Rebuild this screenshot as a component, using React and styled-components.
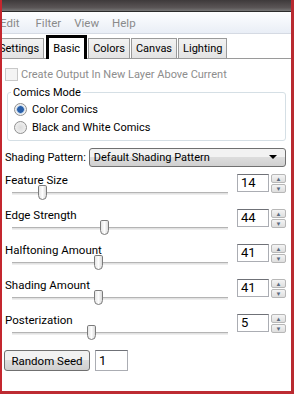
import React from 'react';
import styled, { createGlobalStyle } from 'styled-components';

const GlobalStyle = createGlobalStyle`
  html, body { margin: 0; padding: 0; background: #fff; }
  body { font-family: Roboto, "Liberation Sans", Arial, sans-serif; font-size: 11px; color: #000; }
`;

const sliders = [
  { label: 'Feature Size', value: 14, pos: 26 },
  { label: 'Edge Strength', value: 44, pos: 88 },
  { label: 'Halftoning Amount', value: 41, pos: 82 },
  { label: 'Shading Amount', value: 41, pos: 82 },
  { label: 'Posterization', value: 5, pos: 75 },
];

const tabs = ['Settings', 'Basic', 'Colors', 'Canvas', 'Lighting'];

const App = () => (
  <>
    <GlobalStyle />
    <Window>
      <TitleBar />
      <MenuBar>
        <MenuItem $first>Edit</MenuItem>
        <MenuItem>Filter</MenuItem>
        <MenuItem>View</MenuItem>
        <MenuItem>Help</MenuItem>
      </MenuBar>
      <TabStrip>
        {tabs.map(t => (
          <Tab key={t} $active={t === 'Basic'} $first={t === 'Settings'}>{t}</Tab>
        ))}
      </TabStrip>
      <Content>
        <CheckRow>
          <CheckBox />
          <span>Create Output In New Layer Above Current</span>
        </CheckRow>
        <Group>
          <Legend>Comics Mode</Legend>
          <RadioRow>
            <Radio $checked />
            Color Comics
          </RadioRow>
          <RadioRow>
            <Radio />
            Black and White Comics
          </RadioRow>
        </Group>
        <PatternRow>
          <span>Shading Pattern:</span>
          <Select>
            <span>Default Shading Pattern</span>
            <Caret />
          </Select>
        </PatternRow>
        {sliders.map(s => (
          <SliderBlock key={s.label}>
            <SliderHead>
              <span>{s.label}</span>
              <NumBox>{s.value}</NumBox>
              <Spin>
                <SpinBtn>▲</SpinBtn>
                <SpinBtn>▼</SpinBtn>
              </Spin>
            </SliderHead>
            <Track>
              <Thumb style={{ left: s.pos }} />
            </Track>
          </SliderBlock>
        ))}
        <SeedRow>
          <Button>Random Seed</Button>
          <SeedBox>1</SeedBox>
        </SeedRow>
      </Content>
    </Window>
  </>
);

const Window = styled.div`
  width: 294px;
  height: 394px;
  box-sizing: border-box;
  border-left: 2px solid #c4262e;
  border-right: 3px solid #b82a30;
  border-bottom: 3px solid #bd2b32;
  display: flex;
  flex-direction: column;
  overflow: hidden;
  background: #fff;
`;

const TitleBar = styled.div`
  height: 11px;
  background: linear-gradient(#3e3a3b, #5a5556 70%, #777);
  border-bottom: 1px solid #2c2c2c;
`;

const MenuBar = styled.div`
  height: 21px;
  display: flex;
  align-items: center;
  gap: 13px;
  background: linear-gradient(#fdfeff, #e9eef6);
  border-bottom: 1px solid #d5dae3;
  color: #8a8a8a;
  font-size: 11.5px;
`;

const MenuItem = styled.span`
  margin-left: ${p => (p.$first ? '-2px' : '0')};
  margin-right: ${p => (p.$first ? '3px' : '0')};
`;

const TabStrip = styled.div`
  height: 24px;
  display: flex;
  align-items: flex-end;
  background: #fff;
  border-bottom: 1px solid #9a9a9a;
`;

const Tab = styled.div`
  box-sizing: border-box;
  height: ${p => (p.$active ? '24px' : '20px')};
  margin-left: ${p => (p.$first ? '-8px' : p.$active ? '1px' : '0')};
  margin-right: 1px;
  padding: ${p => (p.$active ? '3px 4px 0' : '2px 4px 0')};
  border: ${p => (p.$active ? '3px solid #000' : '1px solid #9a9a9a')};
  border-bottom: ${p => (p.$active ? 'none' : '0')};
  background: ${p => (p.$active ? '#fff' : 'linear-gradient(#f2f2f2, #e3e3e3)')};
  margin-bottom: ${p => (p.$active ? '-1px' : '0')};
  line-height: 16px;
`;

const Content = styled.div`
  display: flex;
  flex-direction: column;
  padding: 8px 5px 0 3px;
`;

const CheckRow = styled.div`
  display: flex;
  align-items: center;
  gap: 3px;
  color: #8d8d8d;
  height: 14px;
`;

const CheckBox = styled.div`
  width: 11px;
  height: 11px;
  border: 1px solid #c8c8c8;
  background: #f4f4f4;
`;

const Group = styled.fieldset`
  margin: 5px 0 0 2px;
  padding: 1px 6px 4px;
  border: 1px solid #d5dfe5;
  border-radius: 3px;
`;

const Legend = styled.legend`
  padding: 0 2px;
  margin-left: -3px;
`;

const RadioRow = styled.div`
  display: flex;
  align-items: center;
  gap: 5px;
  height: 18px;
`;

const Radio = styled.div`
  width: 11px;
  height: 11px;
  border-radius: 50%;
  border: 1px solid #8f8f8f;
  background: ${p =>
    p.$checked
      ? 'radial-gradient(circle, #2a5fa8 0 3px, #8db4e0 3.5px, #f1f1f1 4.5px)'
      : 'radial-gradient(circle, #dcdcdc, #f6f6f6)'};
`;

const PatternRow = styled.div`
  display: flex;
  align-items: center;
  gap: 3px;
  margin-top: 6px;
  height: 20px;
`;

const Select = styled.div`
  flex: 1;
  height: 19px;
  box-sizing: border-box;
  display: flex;
  align-items: center;
  justify-content: space-between;
  padding: 0 8px 0 4px;
  border: 1px solid #707070;
  border-radius: 3px;
  background: linear-gradient(#f2f2f2 50%, #dcdcdc 50%, #d0d0d0);
`;

const Caret = styled.div`
  width: 0;
  height: 0;
  border-left: 4px solid transparent;
  border-right: 4px solid transparent;
  border-top: 4px solid #000;
`;

const SliderBlock = styled.div`
  display: flex;
  flex-direction: column;
  margin-top: 9px;
  &:not(:first-of-type) { margin-top: 6px; }
`;

const SliderHead = styled.div`
  display: flex;
  align-items: center;
  height: 19px;

  & > span:first-child { flex: 1; align-self: flex-start; font-size: 11.5px; }
`;

const NumBox = styled.div`
  width: 32px;
  height: 18px;
  box-sizing: border-box;
  border: 1px solid #abadb3;
  border-top-color: #6f7177;
  padding-left: 3px;
  line-height: 16px;
  font-size: 13px;
`;

const Spin = styled.div`
  width: 15px;
  height: 18px;
  margin-left: 2px;
  display: flex;
  flex-direction: column;
  gap: 1px;
`;

const SpinBtn = styled.div`
  flex: 1;
  border: 1px solid #b7b7b7;
  border-radius: 2px;
  background: linear-gradient(#f4f4f4, #dedede);
  font-size: 6px;
  line-height: 7px;
  text-align: center;
  color: #5a6a80;
`;

const Track = styled.div`
  position: relative;
  margin: 0 58px 7px 7px;
  border-top: 1px solid #b4b4b4;
  border-bottom: 1px solid #eee;
  background: #e2e2e2;
  height: 1px;
`;

const Thumb = styled.div`
  position: absolute;
  top: -8px;
  width: 9px;
  height: 15px;
  box-sizing: border-box;
  border: 1px solid #7b7b7b;
  border-radius: 2px 2px 5px 5px;
  background: linear-gradient(90deg, #e6e6e6, #fdfdfd 50%, #dadada);
`;

const SeedRow = styled.div`
  display: flex;
  align-items: center;
  gap: 5px;
  margin: 8px 0 0 -1px;
`;

const Button = styled.div`
  width: 86px;
  height: 21px;
  box-sizing: border-box;
  border: 1px solid #707070;
  border-radius: 3px;
  background: linear-gradient(#f2f2f2 50%, #dddddd 50%, #cfcfcf);
  display: flex;
  align-items: center;
  justify-content: center;
  font-size: 11.5px;
`;

const SeedBox = styled.div`
  width: 33px;
  height: 21px;
  box-sizing: border-box;
  border: 1px solid #abadb3;
  border-top-color: #6f7177;
  padding-left: 3px;
  line-height: 19px;
  font-size: 13px;
`;

export default App;
